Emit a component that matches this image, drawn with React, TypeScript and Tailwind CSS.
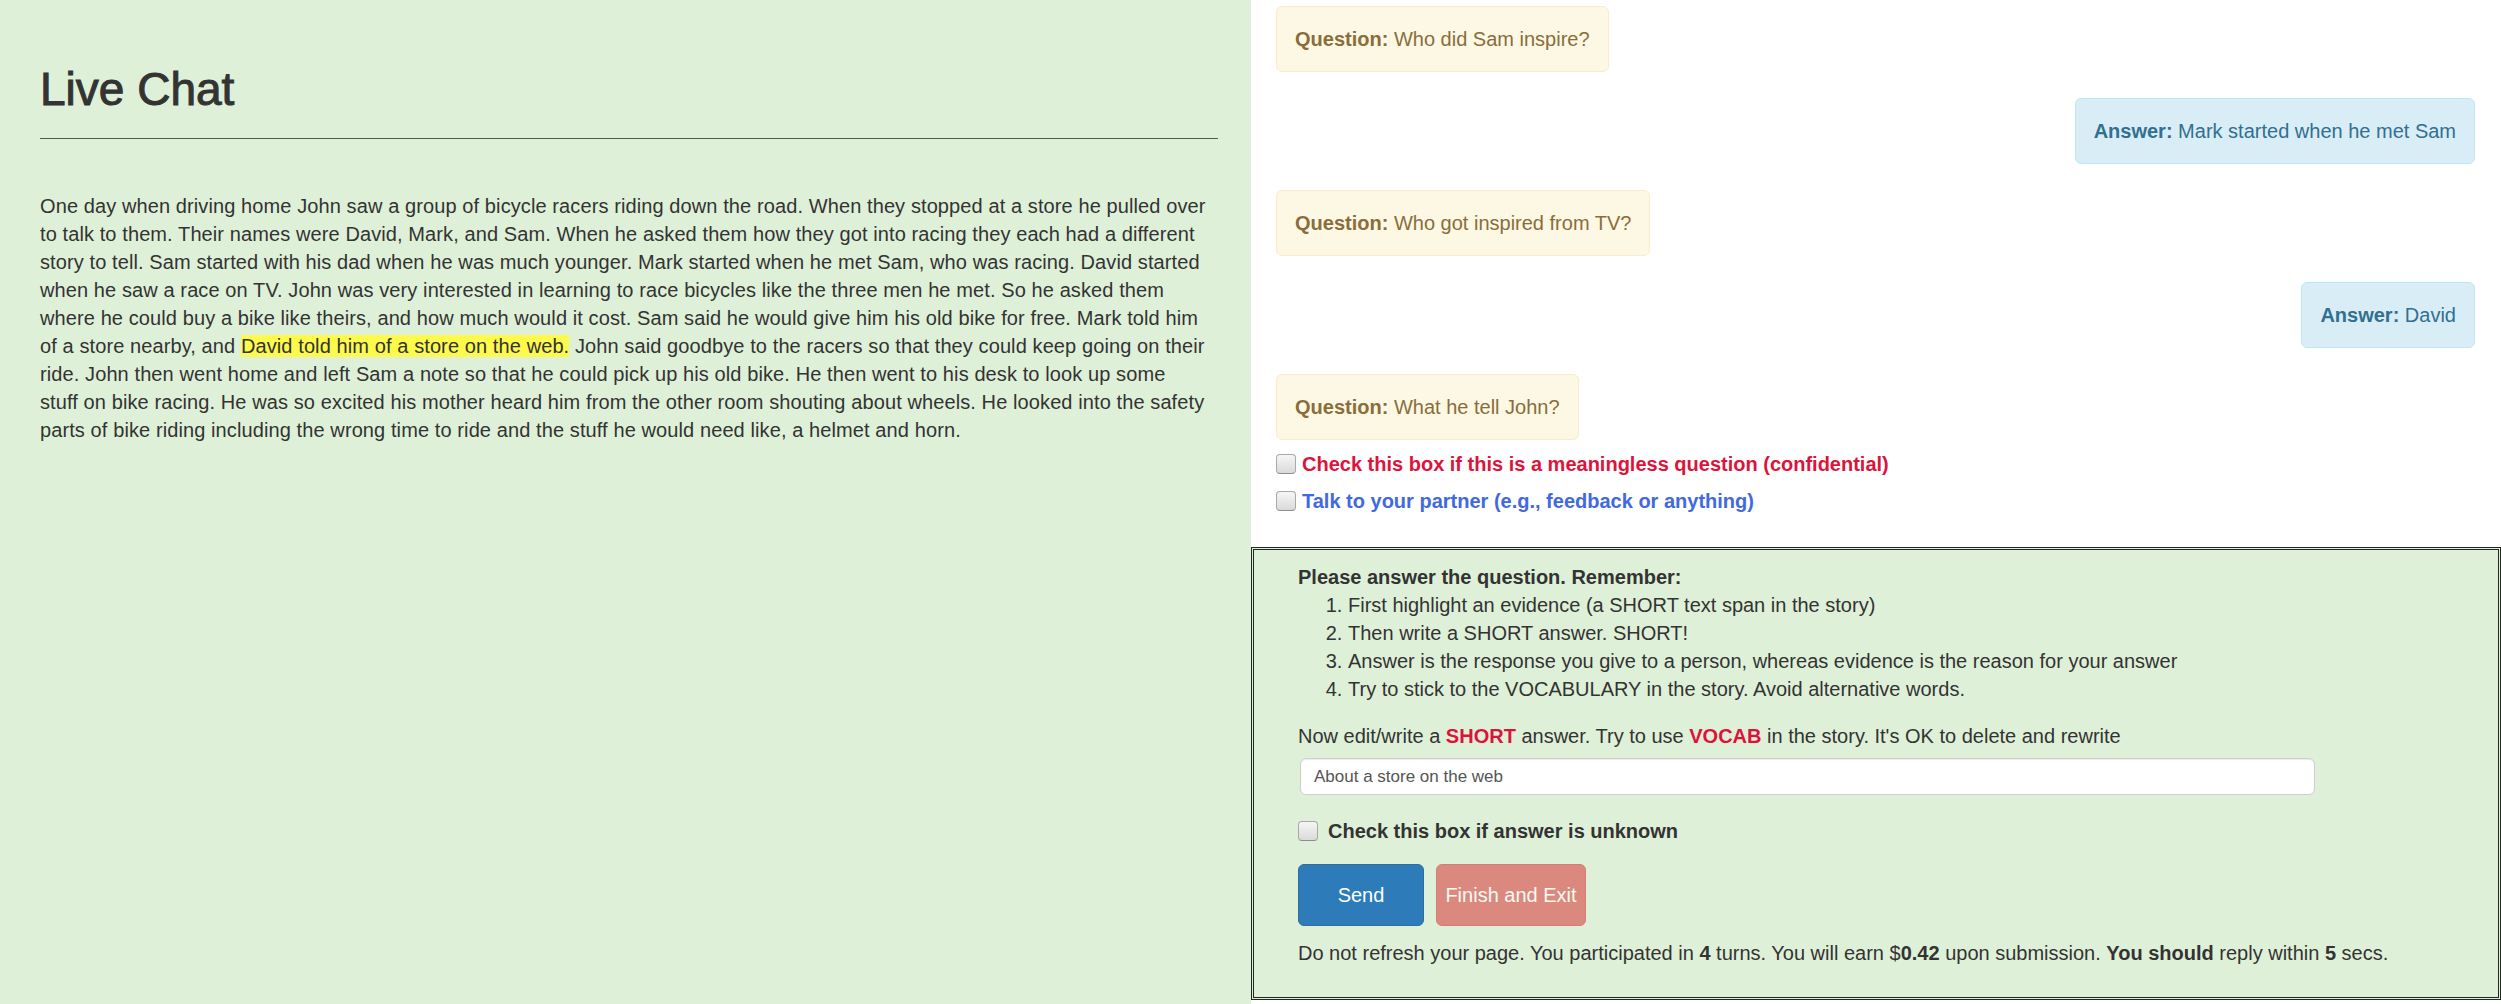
import React from "react";

type Msg = { kind: "q" | "a"; text: string };

const MESSAGES: Msg[] = [
  { kind: "q", text: "Who did Sam inspire?" },
  { kind: "a", text: "Mark started when he met Sam" },
  { kind: "q", text: "Who got inspired from TV?" },
  { kind: "a", text: "David" },
  { kind: "q", text: "What he tell John?" },
];

const RULES = [
  "First highlight an evidence (a SHORT text span in the story)",
  "Then write a SHORT answer. SHORT!",
  "Answer is the response you give to a person, whereas evidence is the reason for your answer",
  "Try to stick to the VOCABULARY in the story. Avoid alternative words.",
];

// grey mac-style checkbox
function Box({ className = "" }: { className?: string }) {
  return (
    <input
      type="checkbox"
      className={
        "h-[20px] w-[20px] shrink-0 appearance-none rounded-[4px] border border-[#a9a9a9] border-b-[#8e8e8e] bg-linear-to-b from-[#f6f6f6] to-[#dadada] " +
        className
      }
    />
  );
}

function Bubble({ msg }: { msg: Msg }) {
  const isQ = msg.kind === "q";
  return (
    <div
      className={
        isQ
          ? "self-start rounded-[6px] border border-[#faebcc] bg-[#fcf8e3] px-[18px] py-[18px] text-[#8a6d3b]"
          : "self-end rounded-[6px] border border-[#bce8f1] bg-[#d9edf7] px-[18px] py-[18px] text-[#31708f]"
      }
    >
      <b>{isQ ? "Question:" : "Answer:"}</b> {msg.text}
    </div>
  );
}

export default function App() {
  return (
    <div className="flex h-[1004px] w-full overflow-hidden bg-white font-['Liberation_Sans',Arial,sans-serif] text-[20px] leading-[28px] text-[#333]">
      {/* story side */}
      <div className="w-[1251px] shrink-0 bg-[#dff0d8] pl-[40px] pr-[33px] pt-[64px]">
        <h1 className="text-[46px] font-medium leading-[50px] [-webkit-text-stroke:1px_#333]">Live Chat</h1>
        <hr className="mt-[24px] border-[#555]" />
        {/* line breaks kept as in the original layout */}
        <p className="mt-[53px] tracking-[0.1px]">
          One day when driving home John saw a group of bicycle racers riding down the road. When they stopped at a
          store he pulled over
          <br />
          to talk to them. Their names were David, Mark, and Sam. When he asked them how they got into racing they
          each had a different
          <br />
          story to tell. Sam started with his dad when he was much younger. Mark started when he met Sam, who was
          racing. David started
          <br />
          when he saw a race on TV. John was very interested in learning to race bicycles like the three men he met. So
          he asked them
          <br />
          where he could buy a bike like theirs, and how much would it cost. Sam said he would give him his old bike
          for free. Mark told him
          <br />
          of a store nearby, and <span className="bg-[#fdfa4c]">David told him of a store on the web.</span> John said
          goodbye to the racers so that they could keep going on their
          <br />
          ride. John then went home and left Sam a note so that he could pick up his old bike. He then went to his desk
          to look up some
          <br />
          stuff on bike racing. He was so excited his mother heard him from the other room shouting about wheels. He
          looked into the safety
          <br />
          parts of bike riding including the wrong time to ride and the stuff he would need like, a helmet and horn.
        </p>
      </div>

      {/* chat side */}
      <div className="flex flex-1 flex-col">
        <div className="flex flex-col gap-[26px] pl-[25px] pr-[26px] pt-[6px]">
          {MESSAGES.map((m, i) => (
            <Bubble key={i} msg={m} />
          ))}
        </div>

        <div className="pl-[25px]">
          <label className="mt-[10px] flex items-center gap-[6px] font-bold text-[#dc143c]">
            <Box />
            Check this box if this is a meaningless question (confidential)
          </label>
          <label className="mt-[9px] flex items-center gap-[6px] font-bold text-[#4169e1]">
            <Box />
            Talk to your partner (e.g., feedback or anything)
          </label>
        </div>

        <div className="mt-[32px] border-[3px] border-double border-[#1f2821] bg-[#dff0d8] pb-[30px] pl-[44px] pt-[13px]">
          <div className="font-bold">Please answer the question. Remember:</div>
          <ol className="list-decimal pl-[50px]">
            {RULES.map((r) => (
              <li key={r}>{r}</li>
            ))}
          </ol>

          <p className="mt-[19px]">
            Now edit/write a <b className="text-[#dc143c]">SHORT</b> answer. Try to use{" "}
            <b className="text-[#dc143c]">VOCAB</b> in the story. It's OK to delete and rewrite
          </p>
          <input
            type="text"
            defaultValue="About a store on the web"
            className="ml-[2px] mt-[8px] block h-[37px] w-[1015px] rounded-[6px] border border-[#cfcfcf] bg-white px-[13px] text-[17px] text-[#555] shadow-[inset_0_1px_1px_rgba(0,0,0,0.08)] outline-none"
          />

          <label className="mt-[22px] flex items-center gap-[10px] font-bold">
            <Box />
            Check this box if answer is unknown
          </label>

          <div className="mt-[19px] flex gap-[12px]">
            <button
              type="button"
              className="h-[62px] w-[126px] rounded-[6px] border border-[#2e6da4] bg-[#2d7bb8] text-white"
            >
              Send
            </button>
            <button
              type="button"
              disabled
              className="h-[62px] w-[150px] rounded-[6px] border border-[#d43f3a] bg-[#d9534f] text-white opacity-[0.65]"
            >
              Finish and Exit
            </button>
          </div>

          <p className="mt-[13px]">
            Do not refresh your page. You participated in <b>4</b> turns. You will earn $<b>0.42</b> upon submission.{" "}
            <b>You should</b> reply within <b>5</b> secs.
          </p>
        </div>
      </div>
    </div>
  );
}
